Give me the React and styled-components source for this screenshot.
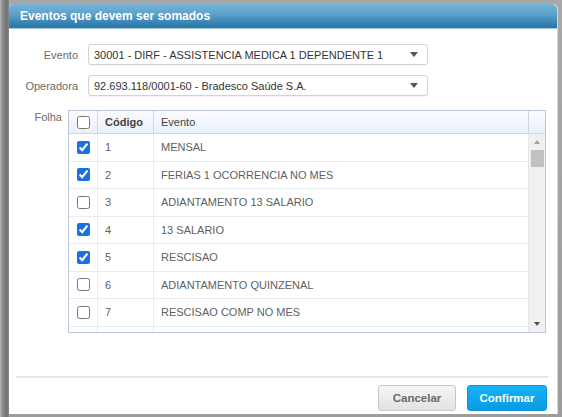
import React from "react";
import styled, { createGlobalStyle } from "styled-components";

const Global = createGlobalStyle`
  html, body { margin: 0; padding: 0; }
  body {
    background-color: #a9a9a9;
    font-family: "Liberation Sans", Arial, sans-serif;
    width: 562px; height: 417px; overflow: hidden;
  }
`;

const Page = styled.div`
  width: 562px;
  height: 417px;
  padding: 4px 5px 3px 9px;
  box-sizing: border-box;
  background: linear-gradient(90deg, #b8b8b8 0px, #888 3px, #727272 7px, #8a8a8a 9px, transparent 9px),
    linear-gradient(180deg, #a8a8a8, #9c9c9c);
`;

const Dialog = styled.div`
  width: 548px;
  height: 410px;
  background: #fff;
  border-radius: 5px 5px 0 0;
  display: flex;
  flex-direction: column;
  box-shadow: 1px 0 0 #d8d8d8;
`;

const Header = styled.div`
  height: 24px;
  flex: none;
  border-radius: 5px 5px 0 0;
  background: linear-gradient(180deg, #7ab4d8 0%, #5a9fca 45%, #3683b3 80%, #2a75a4 100%);
  border-bottom: 1px solid #a8cce0;
  display: flex;
  align-items: center;
  padding-left: 11px;
  color: #fff;
  font-weight: bold;
  font-size: 12px;
`;

const Body = styled.div`
  flex: 1;
  display: flex;
  flex-direction: column;
  padding: 15px 0 0 0;
`;

const FieldRow = styled.div`
  display: flex;
  align-items: center;
  margin-bottom: ${(p) => p.$mb || 0}px;
`;

const Label = styled.div`
  width: 69px;
  text-align: right;
  padding-right: 10px;
  color: #6b6b6b;
  font-size: 11px;
`;

const Select = styled.div`
  width: 340px;
  height: 21px;
  box-sizing: border-box;
  border: 1px solid #d2d2d2;
  border-radius: 3px;
  box-shadow: 0 1px 1px rgba(0,0,0,0.05);
  display: flex;
  align-items: center;
  padding: 0 9px 0 5px;
  font-size: 11px;
  color: #333;
  justify-content: space-between;
`;

const Caret = styled.span`
  width: 0; height: 0;
  border-left: 4.5px solid transparent;
  border-right: 4.5px solid transparent;
  border-top: 5px solid #555;
`;

const FolhaRow = styled.div`
  display: flex;
  align-items: flex-start;
`;

const FolhaLabel = styled.div`
  width: 53px;
  text-align: right;
  padding-right: 6px;
  color: #6b6b6b;
  font-size: 11px;
  padding-top: 1px;
`;

const Table = styled.div`
  width: 478px;
  height: 223px;
  box-sizing: border-box;
  border: 1px solid #bcc8d8;
  display: flex;
  flex-direction: column;
  overflow: hidden;
`;

const HeadRow = styled.div`
  height: 22px;
  flex: none;
  display: grid;
  grid-template-columns: 28px 56px 1fr 17px;
  background: linear-gradient(180deg, #fbfcff, #e9eff9);
  border-bottom: 1px solid #cdd6e3;
`;

const HeadCell = styled.div`
  display: flex;
  align-items: center;
  justify-content: ${(p) => (p.$center ? "center" : "flex-start")};
  padding-left: ${(p) => (p.$center ? 0 : 7)}px;
  border-left: ${(p) => (p.$first ? "none" : "1px solid #cdd6e3")};
  font-size: 11px;
  color: #444;
  font-weight: ${(p) => (p.$bold ? "bold" : "normal")};
`;

const TBody = styled.div`
  flex: 1;
  display: flex;
  min-height: 0;
`;

const Rows = styled.div`
  flex: 1;
  overflow: hidden;
`;

const Row = styled.div`
  height: 27.5px;
  box-sizing: border-box;
  display: grid;
  grid-template-columns: 28px 56px 1fr;
  border-bottom: 1px solid #e8ecf1;
`;

const Cell = styled.div`
  display: flex;
  align-items: center;
  justify-content: ${(p) => (p.$center ? "center" : "flex-start")};
  padding-left: ${(p) => (p.$center ? 0 : 7)}px;
  border-left: ${(p) => (p.$first ? "none" : "1px solid #e8ecf1")};
  font-size: 11px;
  color: #5f5f5f;
`;

const Check = styled.input.attrs({ type: "checkbox", readOnly: true })`
  margin: 0;
  width: 13px;
  height: 13px;
  accent-color: #1a6fe3;
`;

const Scrollbar = styled.div`
  width: 17px;
  flex: none;
  background: #f0f0f0;
  display: flex;
  flex-direction: column;
  align-items: center;
  border-left: 1px solid #e6e6e6;
  box-sizing: border-box;
`;

const Arrow = styled.div`
  height: 16px;
  width: 100%;
  display: flex;
  align-items: center;
  justify-content: center;
  &::after {
    content: "";
    border-left: 3.5px solid transparent;
    border-right: 3.5px solid transparent;
    ${(p) => (p.$up ? "border-bottom: 4px solid #a3a3a3;" : "border-top: 4px solid #505050;")}
  }
`;

const Thumb = styled.div`
  width: 13px;
  height: 17px;
  background: #c1c1c1;
`;

const Spacer = styled.div`flex: 1;`;

const Footer = styled.div`
  margin: 0 9px 0 7px;
  border-top: 2px solid #e6e6e6;
  height: 38px;
  box-sizing: border-box;
  display: flex;
  align-items: flex-start;
  justify-content: flex-end;
  gap: 11px;
  padding: 7px 1px 0 0;
`;

const Button = styled.button`
  height: 26px;
  box-sizing: border-box;
  width: ${(p) => p.$w}px;
  border-radius: 3px;
  font-family: "Liberation Sans", Arial, sans-serif;
  font-size: 11.5px;
  font-weight: bold;
  cursor: pointer;
  border: 1px solid ${(p) => (p.$primary ? "#0e95d8" : "#c8c8c8")};
  color: ${(p) => (p.$primary ? "#fff" : "#6a6a6a")};
  background: ${(p) =>
    p.$primary
      ? "linear-gradient(180deg, #16b2f6, #0a9be6)"
      : "linear-gradient(180deg, #f6f6f6, #e2e2e2)"};
`;

const rows = [
  [true, "1", "MENSAL"],
  [true, "2", "FERIAS 1 OCORRENCIA NO MES"],
  [false, "3", "ADIANTAMENTO 13 SALARIO"],
  [true, "4", "13 SALARIO"],
  [true, "5", "RESCISAO"],
  [false, "6", "ADIANTAMENTO QUINZENAL"],
  [false, "7", "RESCISAO COMP NO MES"],
  [false, "8", ""],
];

export default function App() {
  return (
    <>
      <Global />
      <Page>
        <Dialog>
          <Header>Eventos que devem ser somados</Header>
          <Body>
            <FieldRow $mb={10}>
              <Label>Evento</Label>
              <Select>
                <span>30001 - DIRF - ASSISTENCIA MEDICA 1 DEPENDENTE 1</span>
                <Caret />
              </Select>
            </FieldRow>
            <FieldRow $mb={14}>
              <Label>Operadora</Label>
              <Select>
                <span>92.693.118/0001-60 - Bradesco Saúde S.A.</span>
                <Caret />
              </Select>
            </FieldRow>
            <FolhaRow>
              <FolhaLabel>Folha</FolhaLabel>
              <Table>
                <HeadRow>
                  <HeadCell $first $center>
                    <Check checked={false} />
                  </HeadCell>
                  <HeadCell $bold>Código</HeadCell>
                  <HeadCell>Evento</HeadCell>
                  <HeadCell />
                </HeadRow>
                <TBody>
                  <Rows>
                    {rows.map(([c, code, name]) => (
                      <Row key={code}>
                        <Cell $first $center>
                          <Check checked={c} />
                        </Cell>
                        <Cell>{name ? code : ""}</Cell>
                        <Cell>{name}</Cell>
                      </Row>
                    ))}
                  </Rows>
                  <Scrollbar>
                    <Arrow $up />
                    <Thumb />
                    <Spacer />
                    <Arrow />
                  </Scrollbar>
                </TBody>
              </Table>
            </FolhaRow>
            <Spacer />
            <Footer>
              <Button $w={78}>Cancelar</Button>
              <Button $w={80} $primary>Confirmar</Button>
            </Footer>
          </Body>
        </Dialog>
      </Page>
    </>
  );
}
